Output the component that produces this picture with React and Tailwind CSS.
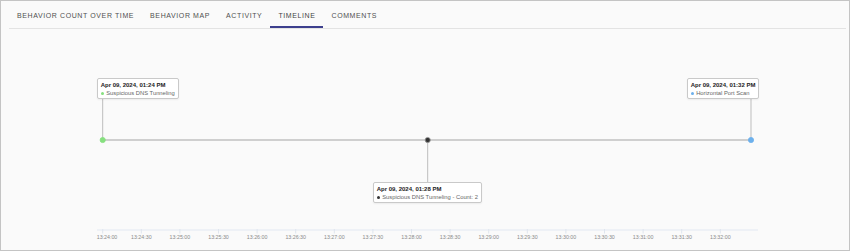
import React from "react";

const TABS = ["Behavior Count Over Time", "Behavior Map", "Activity", "Timeline", "Comments"];

const TICKS = Array.from({ length: 17 }).map((_, i) => {
  const secs = i * 30;
  const m = 24 + Math.floor(secs / 60);
  const s = secs % 60 === 0 ? "00" : "30";
  return { x: 101.7 + i * 38.6, label: `13:${m}:${s}` };
});

const EVENTS = [
  { x: 101.7, color: "#86e07f", ring: "#86e07f" },
  { x: 426.7, color: "#333333", ring: "#9a9a9a" },
  { x: 750, color: "#6cb0ec", ring: "#6cb0ec" },
];

const Tip = ({ className, time, dot, label }) => (
  <div
    className={`absolute rounded-[2px] border border-[#c9c9c9] bg-white px-[3px] pt-[2px] pb-[1px] shadow-[0_1px_2px_rgba(0,0,0,0.06)] ${className}`}
  >
    <p className="text-[6px] leading-[8px] font-bold text-[#222] whitespace-nowrap">{time}</p>
    <p className="flex items-center gap-[2.5px] text-[5.8px] leading-[8px] text-[#666] whitespace-nowrap">
      <span className="block h-[3px] w-[3px] rounded-full" style={{ background: dot }} />
      {label}
    </p>
  </div>
);

export default function App() {
  return (
    <div className="flex h-[251px] w-[850px] flex-col border border-[#c4c4c4] bg-[#fafafa] font-['Liberation_Sans',Arial,sans-serif]">
      {/* Tabs */}
      <div className="ml-2 mr-[3px] flex h-[28px] border-b border-[#e3e3e3]">
        {TABS.map((t) => (
          <div
            key={t}
            className={`flex h-full items-end px-2 pb-[6px] text-[7px] leading-[8px] font-normal uppercase tracking-[0.6px] ${
              t === "Timeline" ? "border-b-2 border-[#3d3f8d] text-[#444]" : "border-b-2 border-transparent text-[#505050]"
            }`}
          >
            {t}
          </div>
        ))}
      </div>

      {/* Timeline chart */}
      <div className="relative flex-1">
        <svg className="absolute inset-0" width="848" height="221" viewBox="0 0 848 221">
          {/* connectors */}
          <line x1="101.7" y1="70" x2="101.7" y2="111" stroke="#bdbdbd" strokeWidth="1" />
          <line x1="750" y1="70" x2="750" y2="111" stroke="#bdbdbd" strokeWidth="1" />
          <line x1="426.7" y1="111" x2="426.7" y2="153.5" stroke="#bdbdbd" strokeWidth="1" />
          {/* main line */}
          <line x1="101.7" y1="111" x2="750" y2="111" stroke="#cfcfcf" strokeWidth="2" />
          {EVENTS.map((e) => (
            <circle key={e.x} cx={e.x} cy="111" r="2.6" fill={e.color} stroke={e.ring} strokeWidth="0.8" />
          ))}
          {/* axis */}
          <line x1="96" y1="201" x2="757" y2="201" stroke="#e2e8f1" strokeWidth="1.2" />
          {TICKS.map((t, i) => (
            <g key={t.label}>
              <line x1={t.x} y1="200" x2={t.x} y2="204.5" stroke="#dfe5ee" strokeWidth="1" />
              <text
                x={i === 0 ? 95.7 : t.x}
                y="209.5"
                textAnchor={i === 0 ? "start" : "middle"}
                fontSize="5.3"
                fill="#8a8a8a"
                fontFamily="'Liberation Sans', Arial, sans-serif"
              >
                {t.label}
              </text>
            </g>
          ))}
        </svg>

        <Tip
          className="left-[95.7px] top-[49.3px]"
          time="Apr 09, 2024, 01:24 PM"
          dot="#86e07f"
          label="Suspicious DNS Tunneling"
        />
        <Tip
          className="left-[685.7px] top-[49.3px]"
          time="Apr 09, 2024, 01:32 PM"
          dot="#6cb0ec"
          label="Horizontal Port Scan"
        />
        <Tip
          className="left-[371.7px] top-[153.3px]"
          time="Apr 09, 2024, 01:28 PM"
          dot="#333333"
          label="Suspicious DNS Tunneling - Count: 2"
        />
      </div>
    </div>
  );
}
